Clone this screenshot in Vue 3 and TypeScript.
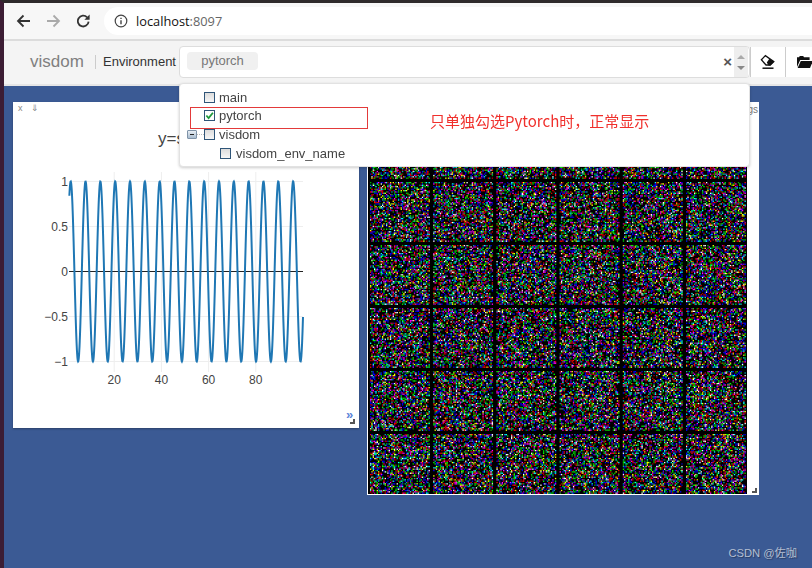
<template>
  <div class="screen">
    <div class="browser-bar">
      <svg class="nav-icon" viewBox="0 0 16 16" width="16" height="16"><path d="M15 8H3M8.5 2.5 3 8l5.5 5.5" fill="none" stroke="#333" stroke-width="1.8" /></svg>
      <svg class="nav-icon" viewBox="0 0 16 16" width="16" height="16"><path d="M1 8h12M7.5 2.5 13 8l-5.5 5.5" fill="none" stroke="#aaa" stroke-width="1.8" /></svg>
      <svg class="nav-icon" viewBox="2 0 16 16" width="16" height="16"><path d="M13.6 8.6a5.4 5.4 0 1 1-1.5-4.3" fill="none" stroke="#333" stroke-width="1.8" /><path d="M14.6 1.6v5.2H9.4z" fill="#333" /></svg>
      <div class="url-pill">
        <svg viewBox="0 0 14 14" width="14" height="14"><circle cx="7" cy="7" r="5.8" fill="none" stroke="#444" stroke-width="1.2" /><path d="M7 6.2v4M7 3.8v1.3" stroke="#444" stroke-width="1.4" /></svg>
        <span class="url"><b>localhost</b><i>:8097</i></span>
      </div>
    </div>

    <nav class="navbar">
      <span class="brand">visdom</span>
      <span class="divider"></span>
      <span class="env-label">Environment</span>
      <div class="select-box">
        <span class="chip">pytorch</span>
        <span class="clear">×</span>
        <span class="spinner"><i class="up"></i><i class="down"></i></span>
      </div>
      <button class="tool">
        <svg viewBox="0 0 16 16" width="16" height="16"><path d="M1.4 5.8 5.4 1.6l8.4 6-3.6 3.4H6z" fill="#fff" stroke="#111" stroke-width="1.3" /><path d="M9.4 4.8 14 7.8 10.4 11.4H8.6L6.8 8.4z" fill="#111" /><path d="M2.5 14.2h11" stroke="#111" stroke-width="1.5" /></svg>
      </button>
      <button class="tool folder">
        <svg viewBox="0 0 16 14" width="16" height="14"><path d="M0 12V2.2h2L2.8 1h3.4l.8 1.2h5.6V5H3.2z" fill="#111" /><path d="M3.8 6H16l-3 7H.6z" fill="#111" /></svg>
      </button>
    </nav>

    <main class="workspace">
      <section class="pane plot-pane">
        <div class="pane-bar"><span>x</span><span>⇓</span></div>
        <svg class="plot" viewBox="13 102 346 326" width="346" height="326">
          <text x="158" y="144" class="plot-title">y=sin(x)</text>
          <line v-for="t in xTicks" :key="t" :x1="xPos(t)" :x2="xPos(t)" y1="172" y2="372" class="grid" />
          <line v-for="t in yGrid" :key="t" x1="69" x2="303" :y1="yPos(t)" :y2="yPos(t)" class="grid" />
          <line x1="69" x2="303" y1="271.5" y2="271.5" class="zero" />
          <path :d="sinePath" class="trace" />
          <text v-for="t in yLabels" :key="t.label" x="68" :y="yPos(t.v) + 4" class="y-label">{{ t.label }}</text>
          <text v-for="t in xTicks" :key="t" :x="xPos(t)" y="384" class="x-label">{{ t }}</text>
          <text x="346" y="419" class="more">»</text>
        </svg>
        <span class="resize"></span>
      </section>

      <section class="pane image-pane">
        <span class="pane-end">ngs</span>
        <canvas ref="noise" class="noise" width="379" height="392"></canvas>
        <span class="resize"></span>
      </section>

      <div class="dropdown">
        <div v-for="row in envRows" :key="row.name" class="tree-row" :class="{ nested: row.nested }">
          <span v-if="row.toggle" class="toggle"></span>
          <span class="check" :class="{ checked: row.checked }">
            <svg v-if="row.checked" viewBox="0 0 10 10" width="9" height="9"><path d="M1.5 5 4 7.8 8.8 2" fill="none" stroke="#1f9a3c" stroke-width="2" /></svg>
          </span>
          <span>{{ row.name }}</span>
        </div>
      </div>

      <div class="note-box"></div>
      <div class="note-text">只单独勾选Pytorch时，正常显示</div>
      <div class="watermark">CSDN @佐咖</div>
    </main>
  </div>
</template>

<script setup lang="ts">
import { onMounted, ref } from 'vue'

interface EnvRow {
  name: string
  checked?: boolean
  toggle?: boolean
  nested?: boolean
}

const envRows: EnvRow[] = [
  { name: 'main' },
  { name: 'pytorch', checked: true },
  { name: 'visdom', toggle: true },
  { name: 'visdom_env_name', nested: true }
]

const xTicks = [20, 40, 60, 80]
const yGrid = [1, 0.5, -0.5, -1]
const yLabels = [
  { v: 1, label: '1' },
  { v: 0.5, label: '0.5' },
  { v: 0, label: '0' },
  { v: -0.5, label: '−0.5' },
  { v: -1, label: '−1' }
]

const xPos = (x: number) => 67 + x * 2.36
const yPos = (y: number) => 271.5 - y * 90

const sinePath = Array.from({ length: 991 }, (_, i) => {
  const x = 1 + i * 0.1
  return `${i ? 'L' : 'M'}${xPos(x).toFixed(2)} ${yPos(Math.sin(x)).toFixed(2)}`
}).join('')

const noise = ref<HTMLCanvasElement | null>(null)

const palette = ['#f00', '#0f0', '#00f', '#0ff', '#f0f', '#ff0', '#fff', '#a00', '#0a0', '#00c', '#c00', '#0c0', '#00f', '#0aa', '#a0a']

onMounted(() => {
  const ctx = noise.value?.getContext('2d')
  if (!ctx) return
  ctx.fillStyle = '#000'
  ctx.fillRect(0, 0, 379, 392)
  // small seeded generator so the picture is the same on every run
  let seed = 12345
  const rand = () => {
    seed = (seed * 1664525 + 1013904223) % 4294967296
    return seed / 4294967296
  }
  const step = 1.33
  for (let row = 0; row < 6; row++) {
    for (let col = 0; col < 6; col++) {
      const left = 2 + col * 63.2
      const top = 17 + row * 63
      for (let py = 0; py < 59; py += step) {
        for (let px = 0; px < 59; px += step) {
          if (rand() < 0.48) continue
          ctx.fillStyle = palette[Math.floor(rand() * palette.length)]
          ctx.fillRect(left + px, top + py, step, step)
        }
      }
    }
  }
})
</script>

<style scoped>
.screen {
  width: 812px;
  height: 568px;
  box-sizing: border-box;
  border-top: 3px solid #2e2a2b;
  border-left: 4px solid #3c1d34;
  display: flex;
  flex-direction: column;
  overflow: hidden;
  font-family: "Liberation Sans", Arial, sans-serif;
}

.browser-bar {
  height: 36px;
  flex: none;
  background: #f7f7f7;
  border-bottom: 2px solid #dcdcdc;
  display: flex;
  align-items: center;
  gap: 15px;
  padding-left: 11px;
}

.nav-icon {
  flex: none;
}

.url-pill {
  margin-left: -4px;
  flex: 1;
  height: 28px;
  background: #fff;
  border-radius: 14px 0 0 14px;
  display: flex;
  align-items: center;
  gap: 8px;
  padding-left: 10px;
}

.url {
  font-family: "Open Sans", sans-serif;
  font-size: 12.8px;
}

.url b {
  font-weight: 400;
  color: #111;
}

.url i {
  font-style: normal;
  color: #666;
}

.navbar {
  height: 45px;
  flex: none;
  background: #f4f4f4;
  border-bottom: 2px solid #e6e6e6;
  display: flex;
  align-items: center;
  padding: 0 0 2px 26px;
  box-sizing: border-box;
}

.brand {
  flex: none;
  font-size: 17px;
  color: #808080;
  width: 65px;
}

.divider {
  flex: none;
  width: 1px;
  height: 14px;
  background: #ccc;
  margin-right: 7px;
}

.env-label {
  flex: none;
  font-size: 13px;
  color: #333;
  width: 76px;
}

.select-box {
  flex: none;
  width: 569px;
  height: 30px;
  margin-top: 1px;
  background: #fff;
  border: 1px solid #ddd;
  border-radius: 4px;
  display: flex;
  align-items: center;
}

.chip {
  margin: 0 0 3px 7px;
  width: 71px;
  text-align: center;
  background: #f0f0f0;
  color: #777;
  font-size: 13px;
  border-radius: 4px;
  line-height: 18px;
}

.clear {
  margin: 0 2px 2px auto;
  color: #555;
  font-size: 15px;
  font-weight: 700;
}

.spinner {
  flex: none;
  width: 14px;
  height: 30px;
  margin-right: 1px;
  background: #eee;
  display: flex;
  flex-direction: column;
  align-items: center;
  justify-content: center;
  gap: 7px;
}

.spinner i {
  width: 0;
  height: 0;
  border-left: 4px solid transparent;
  border-right: 4px solid transparent;
}

.spinner .up {
  border-bottom: 4px solid #aaa;
}

.spinner .down {
  border-top: 4px solid #888;
}

.tool {
  width: 35px;
  height: 30px;
  margin-top: 1px;
  flex: none;
  padding: 0;
  border: 0;
  border-left: 1px solid #ccc;
  background: #fff;
  display: flex;
  align-items: center;
  justify-content: center;
}

.tool.folder {
  padding-left: 4px;
}

.workspace {
  flex: 1;
  background: #3b5a94;
  position: relative;
}

.pane {
  position: absolute;
  background: #fff;
}

.plot-pane {
  left: 9px;
  top: 16px;
  width: 346px;
  height: 326px;
  box-shadow: 0 1px 2px rgba(0, 0, 0, 0.3);
}

.pane-bar {
  position: absolute;
  left: 5px;
  top: 1px;
  display: flex;
  gap: 8px;
  font-size: 9px;
  color: #888;
}

.plot {
  display: block;
  font-family: "Liberation Sans", Arial, sans-serif;
}

.plot-title {
  font-size: 17px;
  fill: #444;
}

.grid {
  stroke: #eee;
  stroke-width: 1;
}

.zero {
  stroke: #222;
  stroke-width: 1;
}

.trace {
  fill: none;
  stroke: #1f77b4;
  stroke-width: 2;
}

.y-label {
  font-size: 12px;
  fill: #444;
  text-anchor: end;
}

.x-label {
  font-size: 12px;
  fill: #444;
  text-anchor: middle;
}

.more {
  font-size: 13px;
  font-weight: 700;
  fill: #5b84d8;
}

.resize {
  position: absolute;
  right: 4px;
  bottom: 4px;
  width: 3px;
  height: 3px;
  border-right: 2px solid #555;
  border-bottom: 2px solid #555;
}

.image-pane {
  left: 363px;
  top: 16px;
  width: 392px;
  height: 393px;
}

.image-pane .resize {
  right: 2px;
  bottom: 2px;
}

.noise {
  position: absolute;
  left: 1px;
  top: 0;
}

.pane-end {
  position: absolute;
  right: 1px;
  top: 2px;
  font-size: 10px;
  color: #777;
}

.dropdown {
  position: absolute;
  left: 175px;
  top: -3px;
  width: 571px;
  height: 84px;
  box-sizing: border-box;
  padding-top: 4px;
  background: #fff;
  border: 1px solid #e2e2e2;
  border-radius: 4px;
  box-shadow: 0 1px 3px rgba(0, 0, 0, 0.2);
  font-size: 13px;
  color: #444;
}

.tree-row {
  height: 18.6px;
  display: flex;
  align-items: center;
  gap: 4px;
  padding-left: 24px;
  position: relative;
}

.tree-row.nested {
  padding-left: 40px;
  gap: 5px;
}

.check {
  flex: none;
  width: 9px;
  height: 9px;
  border: 1.5px solid #2f5578;
  background: linear-gradient(#dcdcdc, #f6f6f6);
  display: flex;
}

.check.checked {
  background: #fff;
}

.toggle {
  position: absolute;
  left: 7px;
  top: 5px;
  width: 8px;
  height: 7px;
  background: linear-gradient(#e8eef4, #a9bccf);
  border: 0.5px solid #7f93a8;
  border-radius: 1px;
}

.toggle::before {
  content: "";
  position: absolute;
  left: 9px;
  top: 3px;
  width: 7px;
  border-top: 1px dotted #bbb;
}

.toggle::after {
  content: "";
  position: absolute;
  left: 2px;
  right: 2px;
  top: 3px;
  height: 1px;
  background: #222;
}

.note-box {
  position: absolute;
  left: 186px;
  top: 21px;
  width: 176px;
  height: 20px;
  border: 1px solid #e33a3a;
}

.note-text {
  position: absolute;
  left: 426px;
  top: 25px;
  font-family: "Noto Sans CJK SC", sans-serif;
  font-size: 15px;
  line-height: 20px;
  color: #f0302c;
}

.watermark {
  position: absolute;
  right: 15px;
  bottom: 8px;
  font-family: "Liberation Sans", "Noto Sans CJK SC", sans-serif;
  font-size: 11.2px;
  color: #b4bfd2;
  text-shadow: 1px 1px 1px rgba(0, 0, 0, 0.35);
}
</style>
